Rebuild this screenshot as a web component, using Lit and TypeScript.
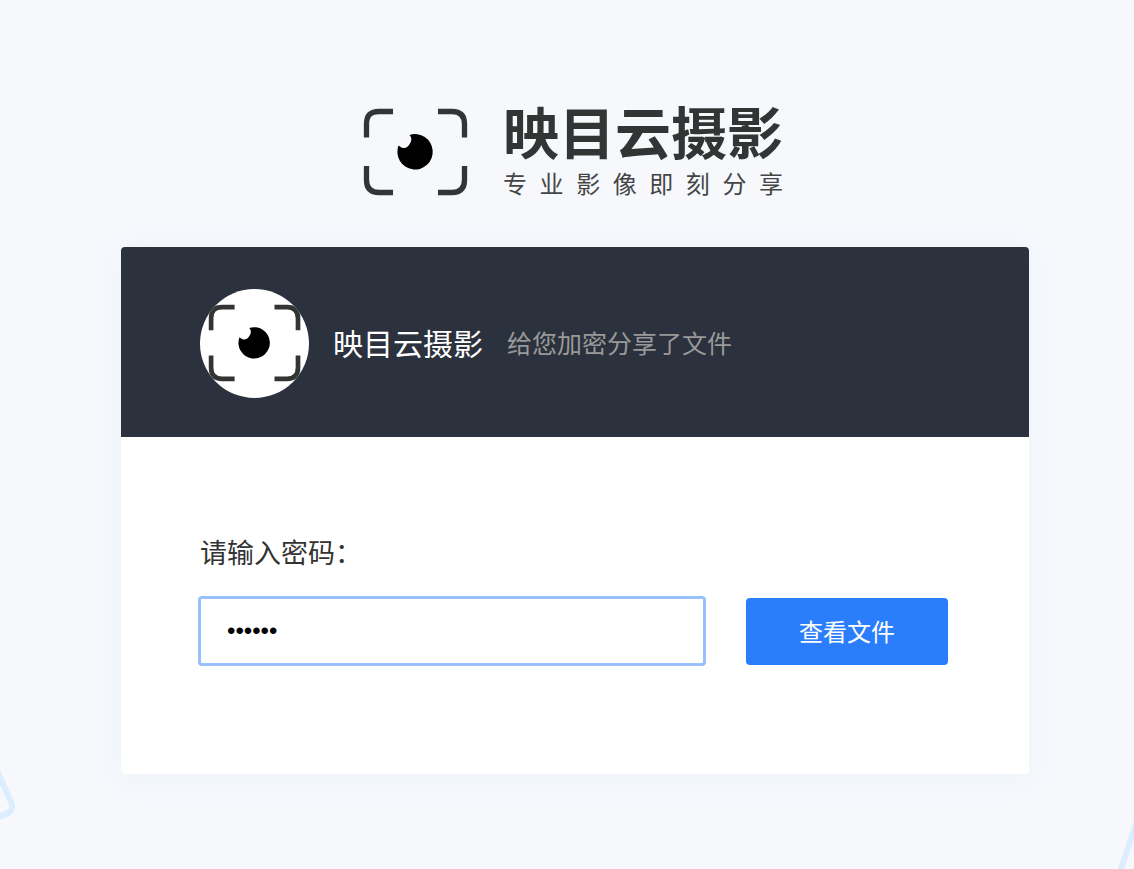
import { LitElement, html, css, svg } from "lit";
import { customElement } from "lit/decorators.js";

const eye = svg`<path d="M-17 -6.5C-13 -3 -9 -3 -6.5 -7C-4 -10 -3 -14 -6 -17A17.7 17.7 0 1 1 -17 -6.5Z" fill="#000" />`;

@customElement("brand-mark")
export class BrandMark extends LitElement {
  static styles = css`
    :host { display: block; }
    svg { display: block; width: 100%; height: auto; }
  `;
  render() {
    return html`<svg viewBox="0 0 106 88" aria-hidden="true">
      <g fill="none" stroke="#333534" stroke-width="5.3">
        <path d="M3.5 29.5V16Q3.5 3.5 16 3.5H30" />
        <path d="M75 3.5H89Q101.5 3.5 101.5 16V29.5" />
        <path d="M3.5 58V72Q3.5 84.5 16 84.5H30" />
        <path d="M75 84.5H89Q101.5 84.5 101.5 72V58" />
      </g>
      <g transform="translate(52.5 44)">${eye}</g>
    </svg>`;
  }
}

@customElement("app-root")
export class AppRoot extends LitElement {
  static styles = css`
    :host {
      display: block;
      font-family: "Noto Sans CJK SC", sans-serif;
      color: #333;
    }
    * { box-sizing: border-box; }
    .page {
      position: relative;
      min-height: 100vh;
      padding: 100px 24px 48px 40px;
      background: #f6f8fc;
      overflow: hidden;
    }
    .decor { position: absolute; bottom: 0; display: block; fill: none; stroke: #dceefe; stroke-width: 6; }
    .decor-left { left: 0; }
    .decor-right { right: 0; }
    .brand { display: flex; justify-content: center; gap: 34px; padding-right: 4px; }
    .logo { width: 106px; margin-top: 8px; flex: none; }
    .name {
      margin: 0;
      font-size: 56px;
      font-weight: 700;
      line-height: 60px;
      color: #333534;
    }
    .slogan {
      display: flex;
      justify-content: space-between;
      margin: 7px 0 0;
      font-size: 24px;
      line-height: 32px;
      color: #444645;
    }
    .card {
      position: relative;
      max-width: 908px;
      margin: 48px auto 0;
      border-radius: 4px;
      background: #fff;
      box-shadow: 0 4px 28px rgba(220, 238, 248, 0.35);
    }
    .head {
      display: flex;
      align-items: center;
      padding: 42px 79px 39px;
      border-radius: 4px 4px 0 0;
      background: #2b313d;
    }
    .avatar {
      display: grid;
      place-items: center;
      width: 109px;
      height: 109px;
      border-radius: 50%;
      background: #fff;
      overflow: hidden;
      flex: none;
    }
    .avatar brand-mark { width: 94px; }
    .owner, .note { padding-bottom: 4px; line-height: 40px; }
    .owner { margin-left: 24px; font-size: 30px; color: #fff; }
    .note { margin-left: 24px; font-size: 25px; color: #999; }
    .form { padding: 95px 81px 108px 79px; }
    label { display: block; font-size: 27px; line-height: 40px; color: #333; }
    .row { display: flex; align-items: center; gap: 40px; margin-top: 24px; }
    input {
      flex: 1;
      min-width: 0;
      height: 70px;
      margin-left: -2px;
      padding: 0 26px;
      border: 3px solid #99c0fd;
      border-radius: 4px;
      background: #fff;
      color: #000;
      font: 400 24px/32px "Liberation Sans", sans-serif;
      outline: none;
    }
    button {
      width: 202px;
      height: 67px;
      padding: 0;
      border: 0;
      border-radius: 4px;
      background: #2b7efb;
      color: #fff;
      font: 400 24px/32px "Noto Sans CJK SC", sans-serif;
      cursor: pointer;
    }
  `;

  render() {
    return html`<main class="page">
      <svg class="decor decor-left" width="20" height="104" viewBox="0 0 20 104" aria-hidden="true">
        <path d="M-5 1L11 37Q14 44 8 48L-6 54" />
      </svg>
      <svg class="decor decor-right" width="20" height="60" viewBox="0 0 20 60" aria-hidden="true">
        <path d="M-3 90L30 -9" />
      </svg>
      <header class="brand">
        <brand-mark class="logo"></brand-mark>
        <div>
          <h1 class="name">映目云摄影</h1>
          <p class="slogan">${[..."专业影像即刻分享"].map((c) => html`<span>${c}</span>`)}</p>
        </div>
      </header>
      <section class="card">
        <div class="head">
          <div class="avatar"><brand-mark></brand-mark></div>
          <span class="owner">映目云摄影</span>
          <span class="note">给您加密分享了文件</span>
        </div>
        <form class="form" @submit=${(e: Event) => e.preventDefault()}>
          <label for="password">请输入密码：</label>
          <div class="row">
            <input id="password" type="password" value="123456" autocomplete="off" />
            <button type="submit">查看文件</button>
          </div>
        </form>
      </section>
    </main>`;
  }
}
